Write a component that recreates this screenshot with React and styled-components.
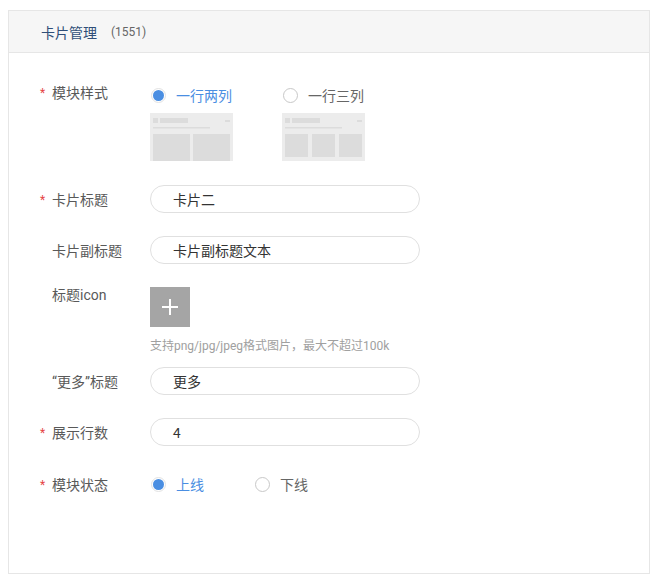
import React from "react";
import styled, { createGlobalStyle } from "styled-components";

const Global = createGlobalStyle`
  html, body { margin: 0; padding: 0; background: #fff; }
  body {
    font-family: Roboto, "Noto Sans CJK SC", "Noto Sans", sans-serif;
    -webkit-font-smoothing: antialiased;
  }
  * { box-sizing: border-box; }
`;

const Page = styled.div`
  padding: 10px 0 0 8px;
`;

const Panel = styled.section`
  width: 642px;
  height: 564px;
  border: 1px solid #e6e6e6;
  background: #fff;
  display: flex;
  flex-direction: column;
`;

const Header = styled.header`
  height: 42px;
  flex: none;
  background: #f6f6f6;
  border-bottom: 1px solid #e6e6e6;
  display: flex;
  align-items: center;
  padding-left: 32px;
  gap: 14px;
`;

const Title = styled.span`
  font-size: 14px;
  color: #2f4e78;
  font-family: "Noto Sans CJK SC", sans-serif;
`;

const Count = styled.span`
  font-size: 12px;
  color: #666;
  padding-top: 1px;
`;

const Form = styled.div`
  display: flex;
  flex-direction: column;
  padding: 32px 0 0 31px;
`;

const Row = styled.div`
  display: flex;
  align-items: flex-start;
  margin-top: ${(p) => p.$mt || 0}px;
`;

const Label = styled.div`
  width: 110px;
  flex: none;
  display: flex;
  align-items: center;
  height: 20px;
  font-size: 14px;
  color: #595959;
  margin-top: ${(p) => p.$offset || 0}px;
  font-family: Roboto, "Noto Sans CJK SC", sans-serif;
`;

const Star = styled.span`
  width: 12px;
  color: #e54545;
  font-size: 12px;
  line-height: 1;
  padding-top: 1px;
`;

const Content = styled.div`
  display: flex;
  flex-direction: column;
`;

const Options = styled.div`
  display: flex;
  gap: ${(p) => p.$gap}px;
`;

const Option = styled.div`
  display: flex;
  flex-direction: column;
  gap: 8px;
`;

const Radio = styled.label`
  display: flex;
  align-items: center;
  height: 20px;
  gap: 10px;
  padding-left: 1px;
  font-size: 14px;
  color: ${(p) => (p.$checked ? "#4a8ee2" : "#666")};
  font-family: "Noto Sans CJK SC", sans-serif;
`;

const Circle = styled.span`
  width: 15px;
  height: 15px;
  border-radius: 50%;
  border: 1px solid ${(p) => (p.$checked ? "#e2e2e2" : "#c8c8c8")};
  background: #fff;
  display: flex;
  align-items: center;
  justify-content: center;
  &::after {
    content: "";
    width: 11px;
    height: 11px;
    border-radius: 50%;
    background: ${(p) => (p.$checked ? "#4a8ee2" : "transparent")};
  }
`;

const Thumb = styled.div`
  width: 83px;
  height: 48px;
  background: #ececec;
  padding: 5px 3px 0 3px;
  display: flex;
  flex-direction: column;
`;

const ThumbTop = styled.div`
  display: flex;
  align-items: center;
  height: 5px;
  gap: 2px;
`;

const ThumbSquare = styled.span`
  width: 5px;
  height: 5px;
  background: #dcdcdc;
`;

const ThumbBar = styled.span`
  width: 28px;
  height: 5px;
  background: #dcdcdc;
`;

const ThumbDash = styled.span`
  margin-left: auto;
  margin-right: 0;
  width: 5px;
  height: 2px;
  background: #dcdcdc;
`;

const ThumbLine = styled.div`
  margin-top: 4px;
  width: 57px;
  height: 1px;
  background: #dcdcdc;
  box-shadow: 0 1px 0 #e4e4e4;
`;

const ThumbCols = styled.div`
  margin-top: 6px;
  display: flex;
  gap: ${(p) => p.$gap}px;
  flex: 1;
`;

const ThumbCol = styled.div`
  flex: 1;
  background: #dcdcdc;
  height: ${(p) => p.$h}px;
`;

const Input = styled.div`
  width: 270px;
  height: 28px;
  border: 1px solid #e0e0e0;
  border-radius: 14px;
  display: flex;
  align-items: center;
  padding-left: 22px;
  font-size: 14px;
  color: #333;
  font-family: "Noto Sans CJK SC", sans-serif;
`;

const Upload = styled.div`
  width: 40px;
  height: 40px;
  background: #a5a5a5;
  display: flex;
  align-items: center;
  justify-content: center;
`;

const Hint = styled.div`
  margin-top: 11px;
  font-size: 12px;
  line-height: 17px;
  color: #a0a0a0;
`;

function Thumbnail({ cols }) {
  const three = cols === 3;
  return (
    <Thumb>
      <ThumbTop>
        <ThumbSquare />
        <ThumbBar />
        <ThumbDash />
      </ThumbTop>
      <ThumbLine />
      <ThumbCols $gap={three ? 4 : 3}>
        {Array.from({ length: cols }).map((_, i) => (
          <ThumbCol key={i} $h={three ? 23 : 27} />
        ))}
      </ThumbCols>
    </Thumb>
  );
}

function FieldLabel({ required, children, offset }) {
  return (
    <Label $offset={offset}>
      <Star>{required ? "*" : ""}</Star>
      {children}
    </Label>
  );
}

export default function App() {
  return (
    <>
      <Global />
      <Page>
        <Panel>
          <Header>
            <Title>卡片管理</Title>
            <Count>(1551)</Count>
          </Header>
          <Form>
            <Row>
              <FieldLabel required offset={-3}>模块样式</FieldLabel>
              <Options $gap={49}>
                <Option>
                  <Radio $checked>
                    <Circle $checked />
                    一行两列
                  </Radio>
                  <Thumbnail cols={2} />
                </Option>
                <Option>
                  <Radio>
                    <Circle />
                    一行三列
                  </Radio>
                  <Thumbnail cols={3} />
                </Option>
              </Options>
            </Row>

            <Row $mt={24}>
              <FieldLabel required offset={4}>卡片标题</FieldLabel>
              <Input>卡片二</Input>
            </Row>

            <Row $mt={23}>
              <FieldLabel offset={4}>卡片副标题</FieldLabel>
              <Input>卡片副标题文本</Input>
            </Row>

            <Row $mt={23}>
              <FieldLabel offset={-3}>标题icon</FieldLabel>
              <Content>
                <Upload>
                  <svg width="18" height="18" viewBox="0 0 18 18">
                    <path d="M9 1v16M1 9h16" stroke="#fff" strokeWidth="2" />
                  </svg>
                </Upload>
                <Hint>支持png/jpg/jpeg格式图片，最大不超过100k</Hint>
              </Content>
            </Row>

            <Row $mt={12}>
              <FieldLabel offset={4}>“更多”标题</FieldLabel>
              <Input>更多</Input>
            </Row>

            <Row $mt={23}>
              <FieldLabel required offset={4}>展示行数</FieldLabel>
              <Input>4</Input>
            </Row>

            <Row $mt={28}>
              <FieldLabel required>模块状态</FieldLabel>
              <Options $gap={50}>
                <Radio $checked>
                  <Circle $checked />
                  上线
                </Radio>
                <Radio>
                  <Circle />
                  下线
                </Radio>
              </Options>
            </Row>
          </Form>
        </Panel>
      </Page>
    </>
  );
}
